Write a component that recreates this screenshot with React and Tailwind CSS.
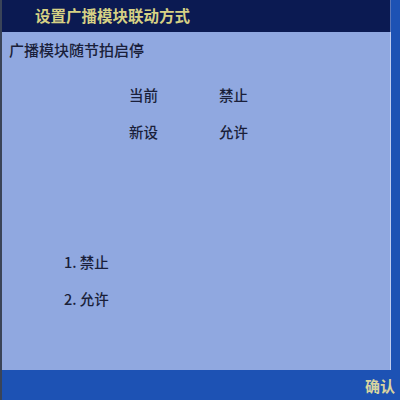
import React from 'react';

const cjk = { fontFamily: '"Noto Sans CJK SC", "Noto Sans", sans-serif' };

const App = () => {
  return (
    <div className="w-[400px] h-[400px] flex flex-col bg-[#1d52b4] border-l-2 border-[#3a4458] overflow-hidden" style={cjk}>
      {/* Title bar */}
      <div className="h-[32px] w-[389px] bg-[#0b1a52] border-r border-[#5a76b8] flex items-center pl-[33px]">
        <span className="text-[15.5px] font-bold text-[#d6d184] leading-none">设置广播模块联动方式</span>
      </div>

      {/* Main panel */}
      <div className="flex-1 w-[389px] bg-[#90a8e0] border-r border-[#c0ccef] flex flex-col text-[#1a1f3a] font-medium">
        <div className="pl-[7px] pt-[8px] text-[15px] leading-[20px]">广播模块随节拍启停</div>

        <div className="grid grid-cols-[90px_60px] pl-[127px] mt-[25px] gap-y-[17px] text-[14.5px] leading-[20px]">
          <span>当前</span>
          <span>禁止</span>
          <span>新设</span>
          <span>允许</span>
        </div>

        <div className="flex flex-col pl-[62px] mt-[110px] gap-y-[17px] text-[14.5px] leading-[20px]">
          <span>1. 禁止</span>
          <span>2. 允许</span>
        </div>
      </div>

      {/* Bottom bar */}
      <div className="h-[30px] flex items-center justify-end pr-[5px]">
        <span className="text-[15px] font-bold text-[#d8d4a0] leading-none">确认</span>
      </div>
    </div>
  );
};

export default App;
